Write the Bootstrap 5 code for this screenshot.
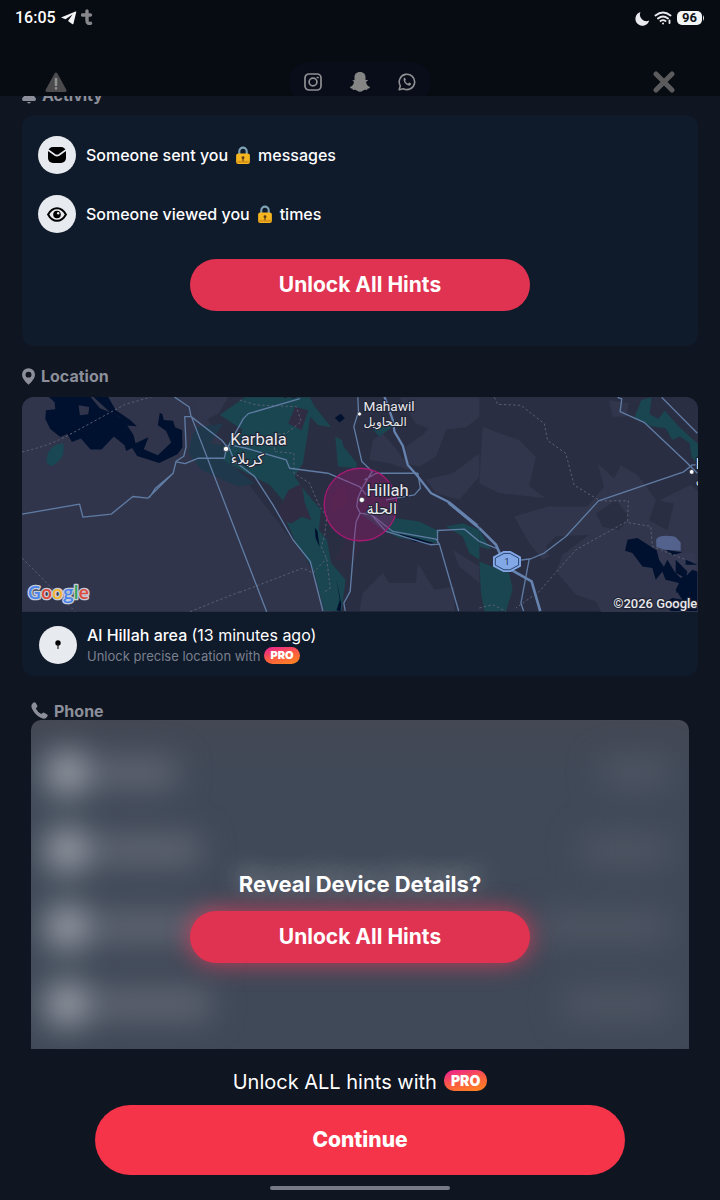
<!DOCTYPE html>
<html lang="en">
<head>
<meta charset="utf-8">
<meta name="viewport" content="width=device-width, initial-scale=1">
<title>Hints</title>
<link href="https://cdn.jsdelivr.net/npm/bootstrap@5.3.0/dist/css/bootstrap.min.css" rel="stylesheet">
<style>
  body { background: #0f1521; color: #fff; font-family: Inter, "Liberation Sans", sans-serif; overflow: hidden; }
  svg { display: block; flex: none; }
  button { color: inherit; }
  .topbar { height: 96px; background: #070b12; overflow: hidden; }
  .status { height: 36px; padding: 0 15px; font: 500 16px/36px Roboto, Inter, sans-serif; }
  .battery { background: #f4f5f7; color: #10131a; font: 700 13px/14px Roboto, sans-serif; border-radius: 5px; width: 25px; }
  .tools { height: 40px; margin-top: 26px; padding: 0 43px; }
  .tools .btn { width: 26px; height: 40px; }
  .apps { background: #090d19; border-radius: 20px; width: 142px; height: 40px; gap: 27px; color: #8f9093; }
  main { padding: 84px 22px 0; }
  .heading { font-size: 16px; line-height: 22px; font-weight: 700; color: #8c8f99; gap: 6px; margin: 0; }
  .panel { background: #0f1a2b; border-radius: 12px; overflow: hidden; }
  .activity { margin-top: 9px; padding: 21px 16px 35px; }
  .disc { width: 38px; height: 38px; background: #e7eaee; flex: none; }
  .entry { font-size: 16px; line-height: 22px; font-weight: 500; gap: 10px; }
  .activity .entry { margin-bottom: 21px; }
  .activity .entry + .entry { margin-bottom: 26px; }
  .pill { display: block; width: 340px; max-width: 100%; border: 0; border-radius: 27px; padding: 12px; background: #e03251; color: #fff; font-size: 21px; line-height: 28px; font-weight: 700; }
  .pill:hover, .go:hover { background: #c92a47; color: #fff; }
  .map { width: 100%; height: auto; aspect-ratio: 677 / 215; }
  .place { padding: 12px 17px 10px; gap: 10px; }
  .note { font-size: 13px; line-height: 20px; color: #7b808d; gap: 4px; }
  .pro { background: linear-gradient(165deg, #ee2a86 10%, #fb5a44 50%, #ff8a1c); border-radius: 9px; font-size: 11px; line-height: 17px; font-weight: 900; color: #fff; padding: 0 6px; }
  .phone { padding: 24px 9px 0; }
  .device { background: linear-gradient(#444854, #404958 16%, #404958 90%, #424857); border-radius: 10px; height: 360px; margin-top: -2px; }
  .ghosts { filter: blur(16px); padding: 33px 20px 0 14px; }
  .ghosts > div { height: 40px; margin-bottom: 37px; }
  .ghosts i { display: block; height: 28px; background: #636875; border-radius: 8px; }
  .ghosts i:first-child { width: 44px; height: 44px; border-radius: 50%; background: #a0a6ae; }
  .ghosts i:last-child { background: #505765; }
  .reveal { top: 150px; }
  .reveal h2 { font-size: 22px; line-height: 28px; font-weight: 700; margin: 0 0 13px; text-shadow: 0 -5px 24px rgba(255,255,255,.55); }
  .reveal .pill { box-shadow: 0 0 24px rgba(224,60,90,.85); }
  .footer { background: #0f1521; height: 151px; padding: 18px 20px 0; }
  .offer { font-size: 20px; line-height: 30px; gap: 7px; margin-bottom: 8px; }
  .offer .pro { font-size: 14px; line-height: 21px; border-radius: 10px; padding: 0 7px; margin-bottom: 4px; }
  .go { width: 530px; max-width: 100%; height: 70px; border: 0; border-radius: 35px; background: #f53349; color: #fff; font-size: 21px; font-weight: 800; }
  .homebar { width: 180px; height: 4px; border-radius: 2px; background: #777a86; margin-top: 11px; }
</style>
</head>
<body>
<header class="topbar fixed-top">
  <div class="status d-flex align-items-center justify-content-between">
    <div class="d-flex align-items-center gap-1">
      <span>16:05</span>
      <svg width="17" height="14" viewBox="0 0 17 14"><path d="M1 6.500 15.500.5q1-.3.7.8L13.500 12.600q-.3 1.200-1.400.5L8 10 12.500 3.500 5.500 8.300Z" fill="#f2f3f5"/></svg>
      <svg width="12" height="18" viewBox="0 0 12 18"><path d="M6 2v9.500q0 3.500 3.500 2.800M1.500 6h8" fill="none" stroke="#85878b" stroke-width="3.400" stroke-linecap="round"/></svg>
    </div>
    <div class="d-flex align-items-center gap-1">
      <svg width="15" height="15" viewBox="0 0 15 15"><path d="M5.500 1a7 7 0 1 0 8.700 8.500A6.500 6.500 0 0 1 5.500 1Z" fill="#e9eaee"/></svg>
      <svg width="19" height="14" viewBox="0 0 19 14" fill="none" stroke="#e9eaee" stroke-width="1.900" stroke-linecap="round"><path d="M1.500 4.500Q9 -1.500 16.500 4.500M4 7.500Q9 3.500 14 7.500M6.500 10Q9 8.300 11.500 10"/><path d="M9 12.500h.1M15.500 9.500v2.500"/></svg>
      <div class="d-flex align-items-center"><span class="battery text-center">96</span><svg width="3" height="6" viewBox="0 0 3 6"><path d="M1 0q2 3 0 6Z" fill="#e9eaee"/></svg></div>
    </div>
  </div>
  <div class="tools d-flex align-items-center justify-content-between">
    <button class="btn p-0 border-0" type="button" aria-label="Report">
      <svg class="mx-auto" width="22" height="21" viewBox="0 0 22 21"><path d="M11 2 20 18.500H2Z" fill="#4b4b4d" stroke="#4b4b4d" stroke-width="3" stroke-linejoin="round"/><path d="M11 7v6M11 16.300v.2" stroke="#8f9092" stroke-width="2.500" stroke-linecap="round"/></svg>
    </button>
    <div class="apps d-flex align-items-center justify-content-center">
      <svg width="18" height="18" viewBox="0 0 18 18" fill="none" stroke="currentColor" stroke-width="1.700"><rect x="1" y="1" width="16" height="16" rx="4"/><circle cx="9" cy="9" r="3.900"/><path d="M13.300 4.500h.8" stroke-linecap="round"/></svg>
      <svg width="22" height="20" viewBox="0 0 22 20"><path d="M11 0C7 0 5.300 2.800 5.500 5.500V8q-1 .3-1.800-.1-1 .6 1.200 1.800C5 12 3.500 14 1 15q-.3 1.300 2.500 1.700.2 1.300.8 1.300 2.500-.5 3.700.7 3 2.300 6 0 1.200-1.200 3.700-.7.600 0 .8-1.300Q21.300 16.300 21 15c-2.500-1-4-3-3.900-5.300 2.200-1.200 2.200-1.800 1.200-1.800-.8.400-1.800.1-1.800.1V5.500C16.700 2.800 15 0 11 0Z" fill="#858585"/></svg>
      <svg width="18" height="18" viewBox="0 0 18 18" fill="none" stroke="currentColor" stroke-width="1.600"><path d="M1.200 16.800 2.300 12.800A7.700 7.700 0 1 1 5.300 15.700Z" stroke-linejoin="round"/><path d="M5.500 5.700q.7-1.300 1.500-.9l.9 2-.8 1.200q1.100 2 2.900 2.700l1.100-1.200 2 1q.1 1.700-1.900 2.200-5.700-1.300-5.700-7Z" fill="currentColor" stroke="none"/></svg>
    </div>
    <button class="btn p-0 border-0" type="button" aria-label="Close">
      <svg class="mx-auto" width="22" height="22" viewBox="0 0 22 22"><path d="m3 3 16 16M19 3 3 19" stroke="#5b5b5d" stroke-width="5" stroke-linecap="round"/></svg>
    </button>
  </div>
</header>

<main>
  <h2 class="heading d-flex align-items-center">
    <svg width="14" height="18" viewBox="0 0 14 18" fill="currentColor"><path d="M7 0Q11.500 0 11.500 6v3.500L14 12.500q0 2.500-1.500 2.500h-11q-1.500 0-1.500-2.500l2.500-3V6Q2.500 0 7 0ZM5 16h4q-2 3-4 0Z"/></svg>
    Activity
  </h2>
  <section class="panel activity">
    <div class="entry d-flex align-items-center">
      <span class="disc rounded-circle d-flex align-items-center justify-content-center"><svg width="18" height="16" viewBox="0 0 18 16"><rect width="18" height="16" rx="5"/><path d="m0 3 7 5q2 1.200 4 0l7-5" fill="none" stroke="#e7eaee" stroke-width="1.600"/></svg></span>
      <span class="d-flex align-items-center gap-2">Someone sent you <svg width="14" height="18" viewBox="0 0 13 17"><path d="M3 8V5a3.500 3.500 0 0 1 7 0v3" fill="none" stroke="#7fa3b5" stroke-width="2"/><rect y="7" width="13" height="10" rx="2" fill="#f5b51f"/><path d="M1 14h11v2H1z" fill="#dc961a"/><circle cx="6.500" cy="11" r="1.400" fill="#5e3c16"/><path d="M6 11h1v3.500H6z" fill="#5e3c16"/></svg> messages</span>
    </div>
    <div class="entry d-flex align-items-center">
      <span class="disc rounded-circle d-flex align-items-center justify-content-center"><svg width="20" height="15" viewBox="0 0 20 15"><path d="M1.100 7.500Q4.500 1.200 10 1.200t8.900 6.300Q15.500 13.800 10 13.800T1.100 7.500Z" fill="none" stroke="#000" stroke-width="2"/><circle cx="10" cy="7.500" r="3.800"/><circle cx="11.200" cy="6.200" r="1.200" fill="#e7eaee"/></svg></span>
      <span class="d-flex align-items-center gap-2">Someone viewed you <svg width="14" height="18" viewBox="0 0 13 17"><path d="M3 8V5a3.500 3.500 0 0 1 7 0v3" fill="none" stroke="#7fa3b5" stroke-width="2"/><rect y="7" width="13" height="10" rx="2" fill="#f5b51f"/><path d="M1 14h11v2H1z" fill="#dc961a"/><circle cx="6.500" cy="11" r="1.400" fill="#5e3c16"/><path d="M6 11h1v3.500H6z" fill="#5e3c16"/></svg> times</span>
    </div>
    <button type="button" class="pill mx-auto">Unlock All Hints</button>
  </section>

  <h2 class="heading d-flex align-items-center" style="margin-top:19px">
    <svg width="13" height="17" viewBox="0 0 14 18"><path d="M7 0a7 7 0 0 1 7 7q0 4.500-7 11Q0 11.500 0 7a7 7 0 0 1 7-7Zm0 3.800a3.200 3.200 0 1 0 0 6.400 3.200 3.200 0 0 0 0-6.400Z" fill="currentColor"/></svg>
    Location
  </h2>
  <section class="panel" style="margin-top:10px">
    <svg class="map" viewBox="0 0 2031 645" preserveAspectRatio="xMidYMid slice" role="img" aria-label="Map of Hillah">
      <rect width="2031" height="645" fill="#2a2e43"/>
      <path d="M0 0H520L640 210 850 480 930 645H0Z" fill="#31354b"/>
      <!-- lighter farmland and built-up areas -->
      <g fill="#31364c">
        <path d="M520 0h100l-30 50-60 30Z"/>
        <g transform="translate(654 -21)">
          <path d="M480 22h240v60l-40 30-90 10-60-20ZM400 150l30-20 50 60 30 50-60-20-60-10ZM555 130l30-35 35 25-30 80-50 30-50-10 10-50ZM560 270l80-20 80-60v70l-60 70-70-20ZM370 610l60-60 20 30 80 0 5-60 50 80 60-10v74H360ZM640 480l80 50v50l-60-50Z"/>
        </g>
        <g transform="translate(1374 -21)">
          <path d="M10 110 60 130 120 150 170 200 150 290 200 325 60 310 0 280ZM105 380l100-30 120 0 50-60-20-70 50 45 20-40 50 30 60 80 100-50 70 60v330H370l-20-40-60-20-60-70 20-50 80-60-100 5-30 30 10 30-20 10-40-50ZM390 30l60 10-10 40-40 0Z"/>
        </g>
      </g>
      <g fill="#292e42"><path d="m1884 370 20-60 55 10-20 80ZM1724 350l60-40 40 50-30 40-50-10Z"/></g>
      <!-- water -->
      <g transform="translate(-66 -111)" fill="#00112f">
        <path d="M147 111H272L300 145 338 160 370 178 401 225 407 250 446 232 432 268 474 286 514 248 499 213 474 196 480 158 488 163 492 180 520 182 526 202 547 211 548 262 533 283 478 309 412 288 397 264 379 273 374 256 342 230 305 269 272 269 243 236 216 246 202 222 181 231 151 207 136 177 138 151 166 148 164 127ZM236 136 268 141 265 163 240 166Z" fill-rule="evenodd"/>
        <path d="M281 111H325L348 151 390 179 411 199 378 197 359 171 332 158Z"/>
      </g>
      <path d="m74 195q0-50 50-57 8 40-20 60-20 18-30-3Z" fill="#194753"/>
      <path d="m510 120 15-30 80-10-40 60 85 10-30 50 80 60-50 10-110-50-40-50Z" fill="#20384c"/>
      <!-- irrigated land -->
      <g transform="translate(654 -21)" fill="#194650">
        <path d="M-60 75 15 22H210L226 50 275 112 235 105 212 80 200 160 190 220 165 260 205 315 244 360 238 420 262 450 275 520 318 570 306 664H254L224 545 165 450 130 370 128 330 90 285 20 250-50 210-30 150 10 120Z"/>
        <path d="m287 140 20 10 5 20 40 50-2 15-55-5-5-60ZM360 370 430 355 470 385 540 395 600 425 590 460 480 445 430 420ZM620 410l50-10 50 20v90l-30-20-20-50ZM400 120l50-20 10 10-40 30Z"/>
      </g>
      <g transform="translate(1374 -21)" fill="#194650">
        <path d="M0 420 35 480 0 470ZM0 515l90 35 10 50-20 65H15L5 610ZM487 30l30-8-5 50 25 15 20-25 45 50 55 50V225l-20-25-5-40-30-20-22 10-20-35-40-5-55-25Z"/>
      </g>
      <g fill="#302c43"><path d="m770 340 30-60 40-20 10 60 20 50-30-10-30 20-30-10ZM800 80l20-50 40 10-20 60ZM930 300l40-40 10 60-50 30ZM980 420l50 0-30 70-60 0Z"/></g>
      <g fill="#00112f">
        <path d="m940 62 18-12 12 14-16 13ZM880 393l8 10 6 48-12-28ZM945 550l14 70-2 25-12-5 10-30ZM1130 410l60 15 50 15-60-5Z"/>
        <g transform="translate(1374 -21)"><path d="m445 450 30-5 55 35 20 10 35 20 25 20 45 20V664H575L555 640 580 625 610 630 590 600 600 580 560 570 550 545 530 570 520 535 490 530 460 490 438 483Z"/></g>
      </g>
      <g transform="translate(1374 -21)">
        <path d="m530 470 40 20 80 0v85l-30-20-15 10-20-20-10 15-35-50Z" fill="#343850"/>
        <path d="m560 480 50 8-30 8ZM565 510l30 50-35 10-10-30ZM590 510l35 35-5 20-30-15ZM620 510l35 15-35 0ZM640 540l15 5-5 30-60 35 15-35Z" fill="#00112f"/>
        <path d="M531 450q5-12 30-12t30 5l14 15v25l-50-3-23-8Z" fill="#52628c"/>
      </g>
      <!-- district borders -->
      <g fill="none" stroke="#5b5f72" stroke-width="3" stroke-dasharray="7 7">
        <path d="M0 165Q70 150 130 120L310 22 388 0M0 484 160 645M505 645 654 585"/>
        <g transform="translate(654 -21)"><path d="M0 30 50 45 170 50 185 95 140 130 105 135V185L163 190V250L210 280 240 350 262 380 255 440 245 470 262 510 272 595 250 610M0 608 190 535 220 550 262 505"/></g>
        <g transform="translate(1374 -21)"><path d="m45 22 10 21 70 3 70 55 10 50 55 40 25 95 70 42 10 5h83l-3 65 70 12 5 60 100 40M440 397 290 480 180 605 110 655M0 655l40-10 40 20"/></g>
      </g>
      <!-- roads -->
      <g fill="none" stroke="#5f7ca4" stroke-width="4" stroke-linejoin="round">
        <path d="M0 352 173 322 183 361 268 352 333 299 378 304 454 229 463 193 486 178 493 150 489 59H508L502 30 458 0M383 302 400 275 454 229M463 195 490 200 530 184H608L615 150M508 59 600 130 625 160M510 62 735 645M615 157 640 110 665 65 680 50 835 5"/>
        <g transform="translate(654 -21)">
          <path d="m-30 165 50 10 120 35 10 25 115 15 95 40 20 25M-35 165-15 215 45 260 100 345 160 450 212 515 250 664M355 22 357 65 343 110 367 215 398 245 370 290 355 325 352 350 362 370 350 395 346 430 332 605 313 640 317 664M375 270 410 250H535L543 295 525 315 440 330M362 370 395 375 440 425 575 465 600 463 590 448 460 425 400 378M595 460 594 422 675 418 720 455M600 463 658 664"/>
        </g>
        <g transform="translate(1374 -21)"><path d="m0 455 55 22M95 515 155 507 195 490 260 440 358 333 612 247 640 225H655M150 507 125 640 133 664M415 22 428 27 423 65 495 97 620 215 655 250M548 22 655 130"/></g>
      </g>
      <path transform="translate(654 -21)" d="m435 20 25 70 5 35 25 42 15 58 28 32 42 53 50 25 47 40 48 40" fill="none" stroke="#6682ae" stroke-width="7"/>
      <path transform="translate(654 -21)" d="m628 338 45 37 40 33" stroke="#6682ae" stroke-width="10" fill="none"/>
      <path transform="translate(1374 -21)" d="M0 415 50 465 70 510 95 540 157 575 183 664" fill="none" stroke="#6682ae" stroke-width="8"/>
      <!-- approximate area -->
      <circle cx="1017" cy="323" r="109" fill="#a1166f" fill-opacity=".36" stroke="#a51a72" stroke-width="4"/>
      <g fill="#fff" stroke="#222638" stroke-width="2"><circle cx="613" cy="156" r="8"/><circle cx="1014" cy="51" r="6"/><circle cx="1021" cy="309" r="8"/><circle cx="2012" cy="225" r="7"/></g>
      <path d="m1418 492 14-20 14-6h22l14 6 14 20-4 14-24 16h-22l-24-16Z" fill="none"/>
      <path d="m1417 481 30-16h20l30 16v27l-30 16h-20l-30-16Z" fill="#83a8e7" stroke="#83a8e7" stroke-width="4"/>
      <path d="m1422 484 26-14h18l26 14v21l-26 14h-18l-26-14Z" fill="none" stroke="#2a456f" stroke-width="3"/>
      <g fill="#e9e9ed" stroke="#202435" stroke-width="7" stroke-linejoin="round" paint-order="stroke" font-family='Roboto, "Noto Sans", "DejaVu Sans", sans-serif'>
        <text x="626" y="145" font-size="50">Karbala</text>
        <text x="627" y="202" font-size="42">كربلاء</text>
        <text x="1026" y="41" font-size="41">Mahawil</text>
        <text x="1026" y="87" font-size="36">المحاويل</text>
        <text x="1035" y="298" font-size="50">Hillah</text>
        <text x="1035" y="352" font-size="44">الحلة</text>
        <text x="775" y="-5" font-size="36">سيب</text>
        <text x="2024" y="216" font-size="44">N</text>
        <text x="2024" y="262" font-size="36">ن</text>
        <text x="2029" y="634" font-size="39" text-anchor="end" font-weight="500">©2026 Google</text>
      </g>
      <text x="1457" y="505" font-size="29" text-anchor="middle" font-family="Roboto, sans-serif" fill="#243b63">1</text>
      <text x="17" y="607" font-size="55" font-family='"Open Sans", sans-serif' font-weight="600" stroke="#c6cbd8" stroke-width="8" stroke-linejoin="round" paint-order="stroke"><tspan fill="#4a83ea">G</tspan><tspan fill="#dd4b3e">o</tspan><tspan fill="#f2b532">o</tspan><tspan fill="#4a83ea">g</tspan><tspan fill="#36a45a">l</tspan><tspan fill="#dd4b3e">e</tspan></text>
    </svg>
    <div class="place d-flex align-items-center">
      <span class="disc rounded-circle d-flex align-items-center justify-content-center"><svg width="6" height="10" viewBox="0 0 6 10"><circle cx="3" cy="3" r="2.700"/><path d="M3 4v5" stroke="#222" stroke-width="1.200"/></svg></span>
      <div>
        <div class="entry"><span>Al Hillah area</span> <span class="fw-normal">(13 minutes ago)</span></div>
        <div class="note d-flex align-items-center">Unlock precise location with <span class="pro">PRO</span></div>
      </div>
    </div>
  </section>

  <div class="phone">
    <h2 class="heading d-flex align-items-center">
      <svg width="17" height="17" viewBox="0 0 17 17"><path d="M1.500 1.500Q3.500-.8 4.800 1l1.400 2.600q.5 1-.3 1.700L4.800 6.400Q6.500 10 10.300 12l1.300-1.100q.7-.6 1.600-.1l2.600 1.500q2 1.300-.5 3.400-2.300 2-6-.1Q4 12.600 1.200 7-.6 3.500 1.500 1.500Z" fill="currentColor"/></svg>
      Phone
    </h2>
    <section class="device position-relative overflow-hidden">
      <div class="ghosts" aria-hidden="true">
        <div class="d-flex align-items-center gap-1"><i></i><i style="width:84px"></i><i class="ms-auto" style="width:68px"></i></div>
        <div class="d-flex align-items-center gap-1"><i></i><i style="width:108px"></i><i class="ms-auto" style="width:88px"></i></div>
        <div class="d-flex align-items-center gap-1"><i></i><i style="width:130px"></i><i class="ms-auto" style="width:134px"></i></div>
        <div class="d-flex align-items-center gap-1"><i></i><i style="width:118px"></i><i class="ms-auto" style="width:106px"></i></div>
      </div>
      <div class="reveal position-absolute start-0 end-0 text-center">
        <h2>Reveal Device Details?</h2>
        <button type="button" class="pill mx-auto">Unlock All Hints</button>
      </div>
    </section>
  </div>
</main>

<footer class="footer fixed-bottom d-flex flex-column align-items-center">
  <div class="offer d-flex align-items-center">Unlock ALL hints with <span class="pro">PRO</span></div>
  <button type="button" class="go">Continue</button>
  <div class="homebar"></div>
</footer>
<script src="https://cdn.jsdelivr.net/npm/bootstrap@5.3.0/dist/js/bootstrap.bundle.min.js"></script>
</body>
</html>
